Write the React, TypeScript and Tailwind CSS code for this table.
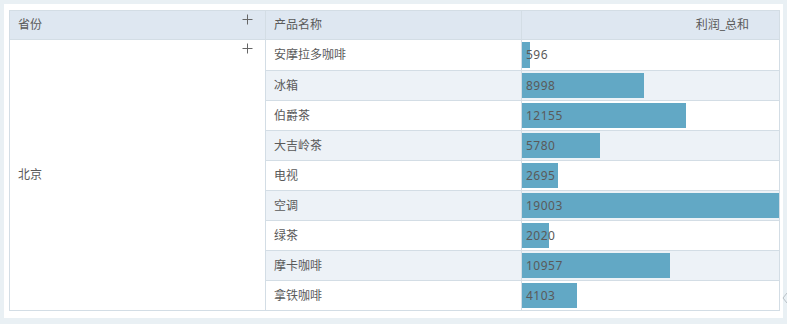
import React from 'react';

const rows = [
  { name: '安摩拉多咖啡', value: 596 },
  { name: '冰箱', value: 8998 },
  { name: '伯爵茶', value: 12155 },
  { name: '大吉岭茶', value: 5780 },
  { name: '电视', value: 2695 },
  { name: '空调', value: 19003 },
  { name: '绿茶', value: 2020 },
  { name: '摩卡咖啡', value: 10957 },
  { name: '拿铁咖啡', value: 4103 },
];

const max = Math.max(...rows.map((r) => r.value));

const font = { fontFamily: '"Noto Sans", "Noto Sans CJK SC", sans-serif' };

const Plus = ({ className }: { className?: string }) => (
  <svg className={className} width="11" height="11" viewBox="0 0 11 11">
    <path d="M5.5 0.5 V10.5 M0.5 5.5 H10.5" stroke="#666" strokeWidth="1" fill="none" />
  </svg>
);

export default function App() {
  return (
    <div className="w-[787px] h-[324px] bg-[#e9f0f4] pt-[4px] pl-[4px] relative" style={font}>
      <div className="w-[779px] h-[314px] bg-white pt-[6px] pl-[5px]">
        <div className="w-[771px] border border-[#d3dde5] text-[12px] text-[#5a5a5a]">
          {/* header */}
          <div className="flex h-[29px] bg-[#dee7f1] border-b border-[#d3dde5]">
            <div className="w-[256px] border-r border-[#d3dde5] flex items-center justify-between pl-[8px] pr-[12px] relative">
              <span>省份</span>
              <Plus className="absolute right-[12px] top-[3px]" />
            </div>
            <div className="w-[256px] border-r border-[#d3dde5] flex items-center pl-[8px]">
              产品名称
            </div>
            <div className="flex-1 flex items-center justify-end pr-[30px]">利润_总和</div>
          </div>
          {/* body */}
          <div className="flex">
            <div className="w-[256px] border-r border-[#d3dde5] relative flex items-center pl-[8px]">
              <span>北京</span>
              <Plus className="absolute right-[12px] top-[3px]" />
            </div>
            <div className="w-[256px] border-r border-[#d3dde5]">
              {rows.map((r, i) => (
                <div
                  key={r.name}
                  className={`h-[30px] flex items-center pl-[8px] ${i > 0 ? 'border-t border-[#d3dde5]' : ''} ${i % 2 === 1 ? 'bg-[#edf2f7]' : 'bg-white'}`}
                >
                  {r.name}
                </div>
              ))}
            </div>
            <div className="flex-1">
              {rows.map((r, i) => (
                <div
                  key={r.name}
                  className={`h-[30px] relative flex items-center ${i > 0 ? 'border-t border-[#d3dde5]' : ''} ${i % 2 === 1 ? 'bg-[#edf2f7]' : 'bg-white'}`}
                >
                  <div
                    className="absolute left-0 top-[2px] bottom-[2px] bg-[#62a8c5]"
                    style={{ width: `${(r.value / max) * 100}%` }}
                  />
                  <span className="relative pl-[4px] tracking-[0.5px]">{r.value}</span>
                </div>
              ))}
            </div>
          </div>
        </div>
      </div>
      <svg className="absolute left-[782px] top-[292px]" width="6" height="12" viewBox="0 0 6 12">
        <path d="M5 1 L1 6 L5 11" fill="none" stroke="#b8c0c6" strokeWidth="1" />
      </svg>
    </div>
  );
}
